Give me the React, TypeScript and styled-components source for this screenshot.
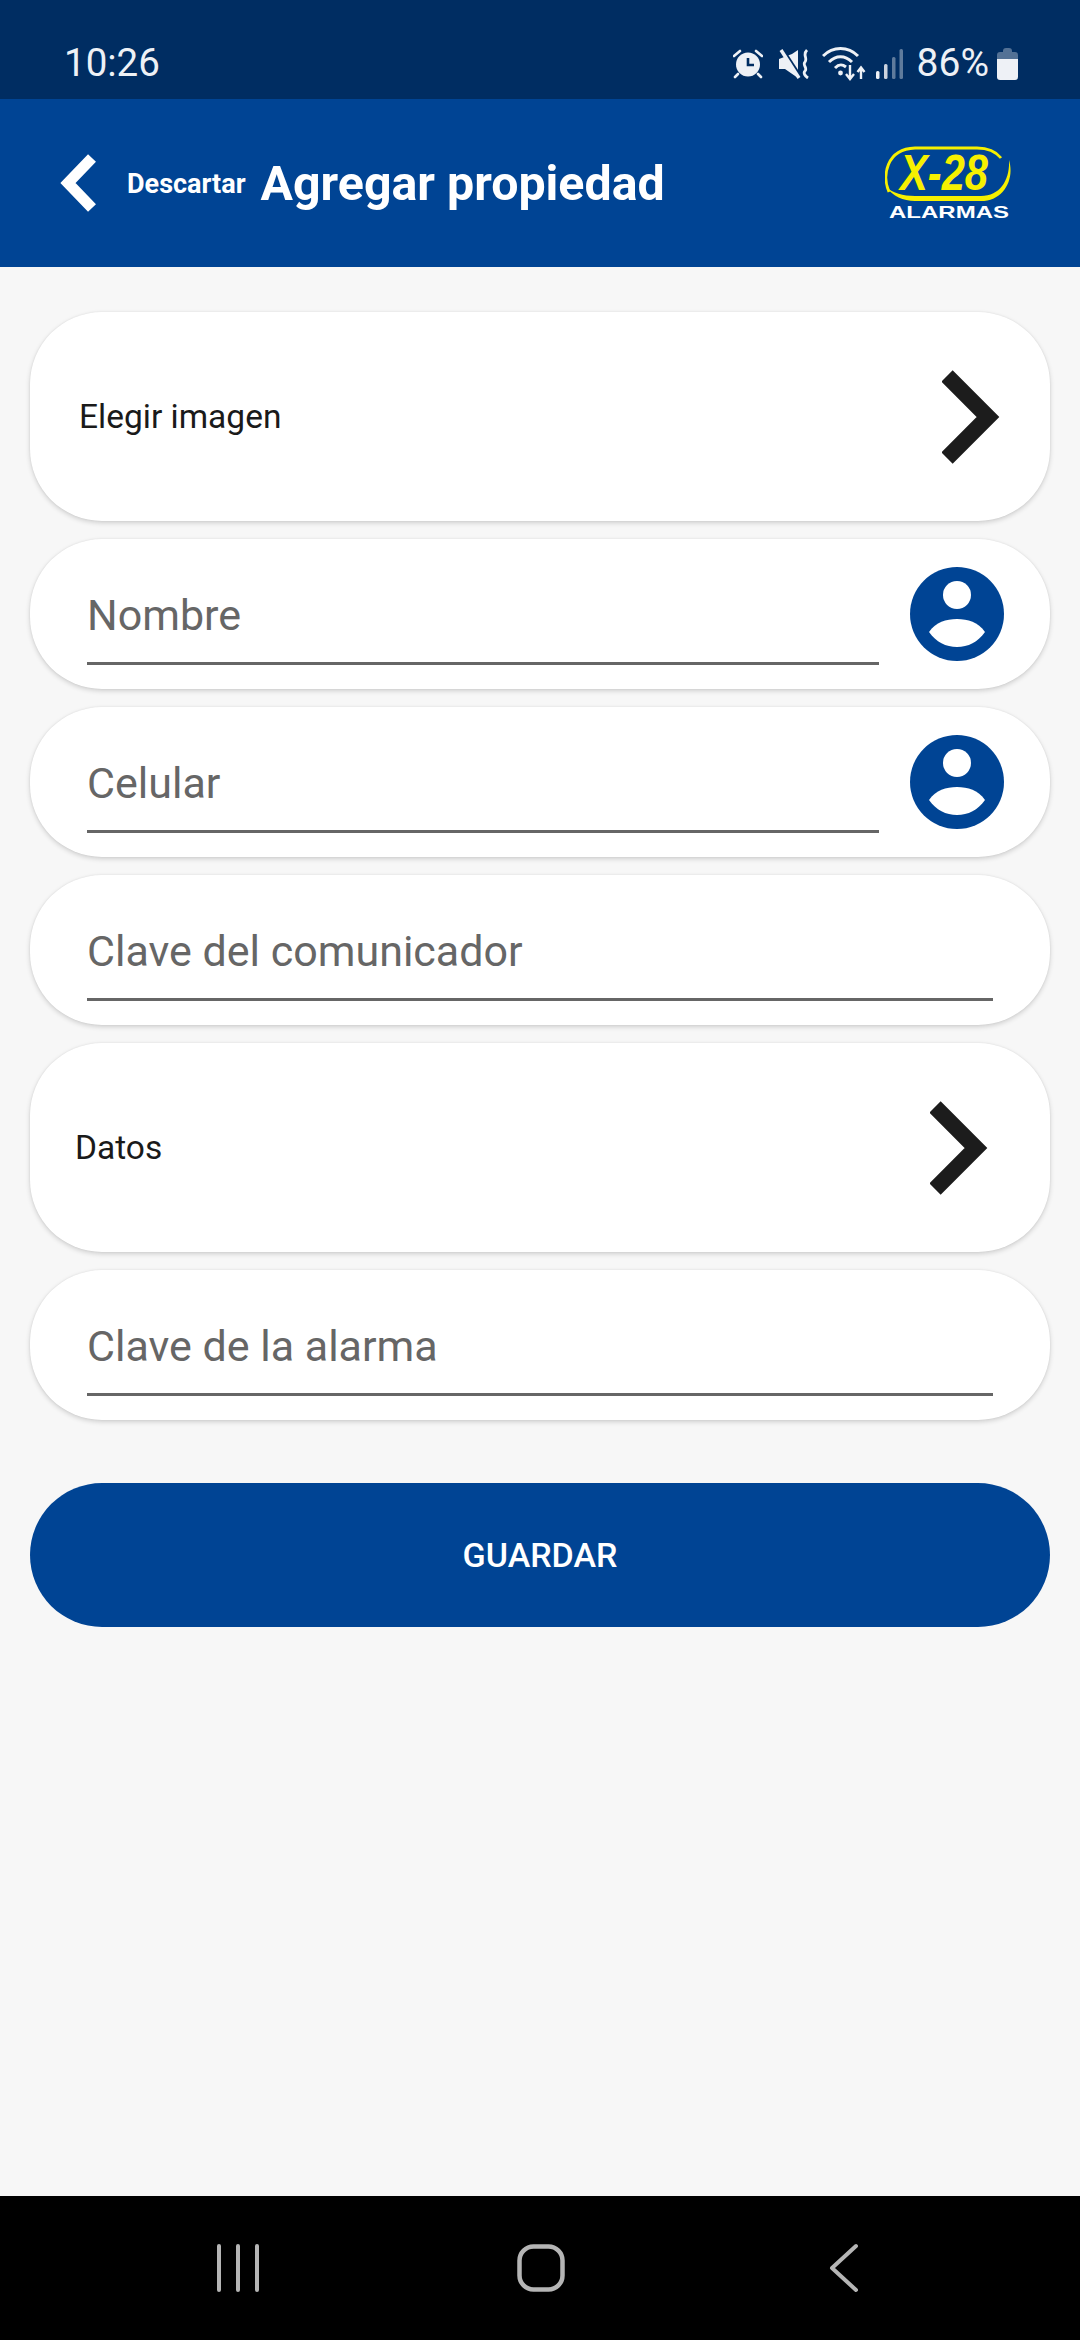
import React from 'react';
import styled, { createGlobalStyle } from 'styled-components';

const Global = createGlobalStyle`
  html, body { margin: 0; padding: 0; background: #f7f7f7; }
  * { box-sizing: border-box; }
`;

const Page = styled.div`
  width: 1080px;
  height: 2340px;
  display: flex;
  flex-direction: column;
  background: #f7f7f7;
  font-family: Roboto, "Liberation Sans", sans-serif;
  overflow: hidden;
`;

const StatusBar = styled.div`
  height: 99px;
  flex: none;
  background: #002d62;
  color: #eef1f6;
  display: flex;
  align-items: center;
  padding: 28px 62px 0 64px;
`;

const Clock = styled.span`
  font-size: 38.5px;
  line-height: 1;
`;

const StatusIcons = styled.div`
  margin-left: auto;
  display: flex;
  align-items: center;
`;

const StatusGlyph = styled.svg<{ $gap?: number }>`
  display: block;
  margin-right: ${p => p.$gap ?? 0}px;
`;

const Percent = styled.span`
  font-size: 39px;
  line-height: 1;
  margin: 0 8px 0 14px;
`;

const Header = styled.header`
  height: 168px;
  flex: none;
  background: #004494;
  color: #fff;
  display: flex;
  align-items: center;
  padding: 0 67px 0 60px;
`;

const BackIcon = styled.svg`
  display: block;
  flex: none;
  margin-right: 31px;
`;

const Discard = styled.span`
  font-size: 27px;
  font-weight: 700;
  margin-right: 15px;
  margin-top: 1px;
  white-space: nowrap;
`;

const Title = styled.h1`
  font-size: 48.3px;
  font-weight: 700;
  margin: 1px 0 0;
  line-height: 1.2;
  white-space: nowrap;
`;

const Logo = styled.svg`
  display: block;
  flex: none;
  margin: 6px 0 0 auto;
`;

const Main = styled.main`
  flex: 1;
  display: flex;
  flex-direction: column;
  gap: 18px;
  padding: 45px 30px 0;
`;

const Card = styled.div`
  width: 1020px;
  background: #fff;
  border-radius: 72px;
  box-shadow: 0 2px 5px rgba(0, 0, 0, 0.16), 0 0 2px rgba(0, 0, 0, 0.08);
  display: flex;
  align-items: center;
`;

const SelectCard = styled(Card)<{ $left: number; $right: number }>`
  height: 209px;
  padding: 0 ${p => p.$right}px 0 ${p => p.$left}px;
  justify-content: space-between;
`;

const SelectLabel = styled.span`
  font-size: 33.5px;
  color: #1a1a1a;
`;

const FieldCard = styled(Card)<{ $hasIcon?: boolean }>`
  height: 150px;
  padding: 0 ${p => (p.$hasIcon ? 46 : 57)}px 0 57px;
  gap: 31px;
`;

const FieldInput = styled.input`
  flex: 1;
  min-width: 0;
  height: 86px;
  margin-top: 16px;
  padding: 0 0 11px 0;
  border: 0;
  border-bottom: 3px solid #666;
  outline: none;
  background: transparent;
  font-family: inherit;
  font-size: 43px;
  color: #666;
  &::placeholder { color: #666; opacity: 1; }
`;

const SaveButton = styled.button`
  width: 1020px;
  height: 144px;
  margin-top: 45px;
  border: 0;
  border-radius: 72px;
  background: #004494;
  color: #fff;
  font-family: inherit;
  font-size: 34px;
  font-weight: 500;
`;

const NavBar = styled.nav`
  height: 144px;
  flex: none;
  background: #000;
  display: flex;
  align-items: center;
  justify-content: space-between;
  padding: 0 221px 0 216px;
`;

const HomeIcon = styled.svg`
  display: block;
  margin-left: -9px;
`;

const Chevron = () => (
  <svg width="60" height="96" viewBox="0 0 60 96" fill="none">
    <path d="M5 7 L46 48 L5 89" stroke="#1c1c1c" strokeWidth="16" />
  </svg>
);

const PersonIcon = () => (
  <svg width="94" height="94" viewBox="0 0 94 94" style={{ flex: 'none' }}>
    <circle cx="47" cy="47" r="47" fill="#004494" />
    <circle cx="47" cy="28" r="14" fill="#fff" />
    <path d="M19 65 C26 55 36 52 47 52 C58 52 68 55 75 65 C68 75 58 80 47 80 C36 80 26 75 19 65 Z" fill="#fff" />
  </svg>
);

const Alarm = () => (
  <StatusGlyph $gap={16} width="30" height="30" viewBox="0 0 30 30">
    <circle cx="15" cy="15.5" r="12" fill="#eef1f6" />
    <path d="M1 7 L7 2 M29 7 L23 2 M5 25 L2 28 M25 25 L28 28" stroke="#eef1f6" strokeWidth="2.6" strokeLinecap="round" />
    <path d="M15 9 V16 H21" stroke="#002d62" strokeWidth="2.6" fill="none" />
  </StatusGlyph>
);

const Mute = () => (
  <StatusGlyph $gap={13} width="30" height="30" viewBox="0 0 30 30">
    <path d="M0 10 V20 H6 L19 29 V1 L13 5 Z" fill="#eef1f6" />
    <path d="M3 0 L22 29" stroke="#002d62" strokeWidth="4" />
    <path d="M2 1 L20 29" stroke="#eef1f6" strokeWidth="3.4" />
    <path d="M28 1 C23 6 29 9 26 13 C23 16 29 19 26 22 C24 24 26 27 29 29" stroke="#eef1f6" strokeWidth="2.8" fill="none" />
  </StatusGlyph>
);

const Wifi = () => (
  <StatusGlyph $gap={10} width="44" height="34" viewBox="0 0 44 34" fill="none">
    <path d="M1 9 C11 -1 26 -1 36 9" stroke="#eef1f6" strokeWidth="3" />
    <path d="M7 15 C14 8 23 8 30 15" stroke="#eef1f6" strokeWidth="3" />
    <path d="M13 21 C17 17 20 17 24 20" stroke="#eef1f6" strokeWidth="3" />
    <circle cx="18.5" cy="26" r="2.4" fill="#eef1f6" />
    <path d="M28 18 V31 M24 27 L28 32 L32 27 M39 32 V21 M35.5 25 L39 20.5 L42.5 25" stroke="#eef1f6" strokeWidth="2.4" />
  </StatusGlyph>
);

const Signal = () => (
  <StatusGlyph width="27" height="30" viewBox="0 0 27 30">
    <rect x="0" y="22" width="3.5" height="8" rx="1.5" fill="#eef1f6" />
    <rect x="8" y="15" width="3.5" height="15" rx="1.5" fill="#eef1f6" opacity="0.85" />
    <rect x="16" y="8" width="3.5" height="22" rx="1.5" fill="#eef1f6" opacity="0.4" />
    <rect x="23.5" y="0" width="3.5" height="30" rx="1.5" fill="#eef1f6" opacity="0.4" />
  </StatusGlyph>
);

const Battery = () => (
  <StatusGlyph width="21" height="32" viewBox="0 0 21 32">
    <path d="M6 3 Q6 0 9 0 H12 Q15 0 15 3 V4 H18 Q21 4 21 7 V11 H0 V7 Q0 4 3 4 H6 Z" fill="#eef1f6" opacity="0.35" />
    <path d="M0 11 H21 V29 Q21 32 18 32 H3 Q0 32 0 29 Z" fill="#eef1f6" />
  </StatusGlyph>
);

const X28Logo = () => (
  <Logo width="128" height="80" viewBox="0 0 128 80">
    <path d="M4 46 C-3 30 1 3 30 2 H92 C104 2 112 7 116 12" fill="none" stroke="#f6f000" strokeWidth="2.8" />
    <path d="M1 41 C8 50 18 55 30 55 H96 C118 55 130 34 124 14 C125 33 116 50 96 50 H30 C18 50 8 47 1 41 Z" fill="#f6f000" />
    <text x="15" y="44" textLength="88" lengthAdjust="spacingAndGlyphs" fontFamily="Liberation Sans, sans-serif" fontWeight="700" fontStyle="italic" fontSize="50" fill="#f6f000">X-28</text>
    <text x="4" y="72" textLength="120" lengthAdjust="spacingAndGlyphs" fontFamily="Liberation Sans, sans-serif" fontWeight="700" fontSize="17" fill="#fff">ALARMAS</text>
  </Logo>
);

export default function App() {
  return (
    <Page>
      <Global />
      <StatusBar>
        <Clock>10:26</Clock>
        <StatusIcons>
          <Alarm />
          <Mute />
          <Wifi />
          <Signal />
          <Percent>86%</Percent>
          <Battery />
        </StatusIcons>
      </StatusBar>
      <Header>
        <BackIcon width="36" height="58" viewBox="0 0 36 58" fill="none">
          <path d="M32 4 L8 29 L32 54" stroke="#fff" strokeWidth="11" />
        </BackIcon>
        <Discard>Descartar</Discard>
        <Title>Agregar propiedad</Title>
        <X28Logo />
      </Header>
      <Main>
        <SelectCard $left={49} $right={48}>
          <SelectLabel>Elegir imagen</SelectLabel>
          <Chevron />
        </SelectCard>
        <FieldCard $hasIcon>
          <FieldInput placeholder="Nombre" />
          <PersonIcon />
        </FieldCard>
        <FieldCard $hasIcon>
          <FieldInput placeholder="Celular" />
          <PersonIcon />
        </FieldCard>
        <FieldCard>
          <FieldInput placeholder="Clave del comunicador" />
        </FieldCard>
        <SelectCard $left={45} $right={60}>
          <SelectLabel>Datos</SelectLabel>
          <Chevron />
        </SelectCard>
        <FieldCard>
          <FieldInput placeholder="Clave de la alarma" />
        </FieldCard>
        <SaveButton>GUARDAR</SaveButton>
      </Main>
      <NavBar>
        <svg width="46" height="48" viewBox="0 0 46 48" fill="none" stroke="#b5b5b5" strokeWidth="4" strokeLinecap="round">
          <path d="M3 2 V46 M22 2 V46 M41 2 V46" />
        </svg>
        <HomeIcon width="48" height="48" viewBox="0 0 48 48" fill="none" stroke="#b5b5b5" strokeWidth="4.5">
          <rect x="2.5" y="2.5" width="43" height="43" rx="14" />
        </HomeIcon>
        <svg width="30" height="50" viewBox="0 0 30 50" fill="none" stroke="#b5b5b5" strokeWidth="4" strokeLinecap="round" strokeLinejoin="round">
          <path d="M27 3 L3 25 L27 47" />
        </svg>
      </NavBar>
    </Page>
  );
}
